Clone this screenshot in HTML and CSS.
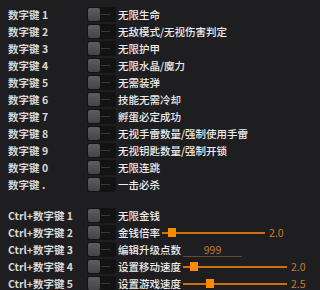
FILE: index.html
```html
<!DOCTYPE html>
<html>
<head>
<meta charset="utf-8">
<link rel="stylesheet" href="styles.css">
</head>
<body>
<div class="panel">
  <div class="group">
    <div class="row"><span class="key">数字键 1</span><span class="toggle"><span class="knob"></span></span><span class="desc">无限生命</span></div>
    <div class="row"><span class="key">数字键 2</span><span class="toggle"><span class="knob"></span></span><span class="desc">无敌模式/无视伤害判定</span></div>
    <div class="row"><span class="key">数字键 3</span><span class="toggle"><span class="knob"></span></span><span class="desc">无限护甲</span></div>
    <div class="row"><span class="key">数字键 4</span><span class="toggle"><span class="knob"></span></span><span class="desc">无限水晶/魔力</span></div>
    <div class="row"><span class="key">数字键 5</span><span class="toggle"><span class="knob"></span></span><span class="desc">无需装弹</span></div>
    <div class="row"><span class="key">数字键 6</span><span class="toggle"><span class="knob"></span></span><span class="desc">技能无需冷却</span></div>
    <div class="row"><span class="key">数字键 7</span><span class="toggle"><span class="knob"></span></span><span class="desc">孵蛋必定成功</span></div>
    <div class="row"><span class="key">数字键 8</span><span class="toggle"><span class="knob"></span></span><span class="desc">无视手雷数量/强制使用手雷</span></div>
    <div class="row"><span class="key">数字键 9</span><span class="toggle"><span class="knob"></span></span><span class="desc">无视钥匙数量/强制开锁</span></div>
    <div class="row"><span class="key">数字键 0</span><span class="toggle"><span class="knob"></span></span><span class="desc">无限连跳</span></div>
    <div class="row"><span class="key">数字键 .</span><span class="toggle"><span class="knob"></span></span><span class="desc">一击必杀</span></div>
  </div>
  <div class="group">
    <div class="row"><span class="key">Ctrl+数字键 1</span><span class="toggle"><span class="knob"></span></span><span class="desc">无限金钱</span></div>
    <div class="row"><span class="key">Ctrl+数字键 2</span><span class="toggle"><span class="knob"></span></span><span class="desc">金钱倍率</span>
      <span class="slider s-short"><span class="thumb" style="left:6px"></span></span><span class="val">2.0</span></div>
    <div class="row"><span class="key">Ctrl+数字键 3</span><span class="toggle"><span class="knob"></span></span><span class="desc">编辑升级点数</span>
      <span class="field">999</span></div>
    <div class="row"><span class="key">Ctrl+数字键 4</span><span class="toggle"><span class="knob"></span></span><span class="desc">设置移动速度</span>
      <span class="slider s-long"><span class="thumb" style="left:7px"></span></span><span class="val">2.0</span></div>
    <div class="row"><span class="key">Ctrl+数字键 5</span><span class="toggle"><span class="knob"></span></span><span class="desc">设置游戏速度</span>
      <span class="slider s-long"><span class="thumb" style="left:23px"></span></span><span class="val">2.5</span></div>
  </div>
</div>
</body>
</html>
```
FILE: styles.css
```css
html, body {
  margin: 0;
  padding: 0;
  background: #1e1e20;
}
body {
  font-family: "Noto Sans CJK SC", "Noto Sans", sans-serif;
  font-size: 10.5px;
  color: #e2e2e2;
}
.panel {
  padding: 7px 0 0 8px;
  display: flex;
  flex-direction: column;
  gap: 16px;
}
.group {
  display: flex;
  flex-direction: column;
  gap: 2px;
}
.row {
  height: 15px;
  display: flex;
  align-items: center;
  white-space: nowrap;
}
.key {
  width: 79px;
  flex: none;
  font-weight: bold;
  color: #d8d8d8;
  line-height: 15px;
}
.toggle {
  position: relative;
  width: 29px;
  height: 15px;
  flex: none;
  background: #131314;
  border-radius: 2px;
  margin-right: 2px;
}
.toggle::after {
  content: "";
  position: absolute;
  left: 14px;
  right: 6px;
  top: 7px;
  height: 1px;
  background: #3a3a3c;
}
.knob {
  position: absolute;
  left: 1px;
  top: 1px;
  width: 12px;
  height: 13px;
  border-radius: 2px;
  background: linear-gradient(#5e5e60, #444446);
}
.desc {
  line-height: 15px;
  color: #ececec;
  font-weight: 500;
}
.slider {
  position: relative;
  height: 2px;
  background: #cf6f10;
  flex: none;
}
.s-short {
  width: 103px;
  margin-left: 2px;
}
.s-long {
  width: 104px;
  margin-left: 2px;
}
.thumb {
  position: absolute;
  top: -4px;
  width: 8px;
  height: 9px;
  background: #ff8a00;
}
.val {
  margin-left: 4px;
  color: #c97a30;
}
.field {
  margin-left: 2px;
  width: 59px;
  text-align: center;
  color: #c97a30;
  border-bottom: 1px solid #6a4a2a;
  line-height: 13px;
}
```
